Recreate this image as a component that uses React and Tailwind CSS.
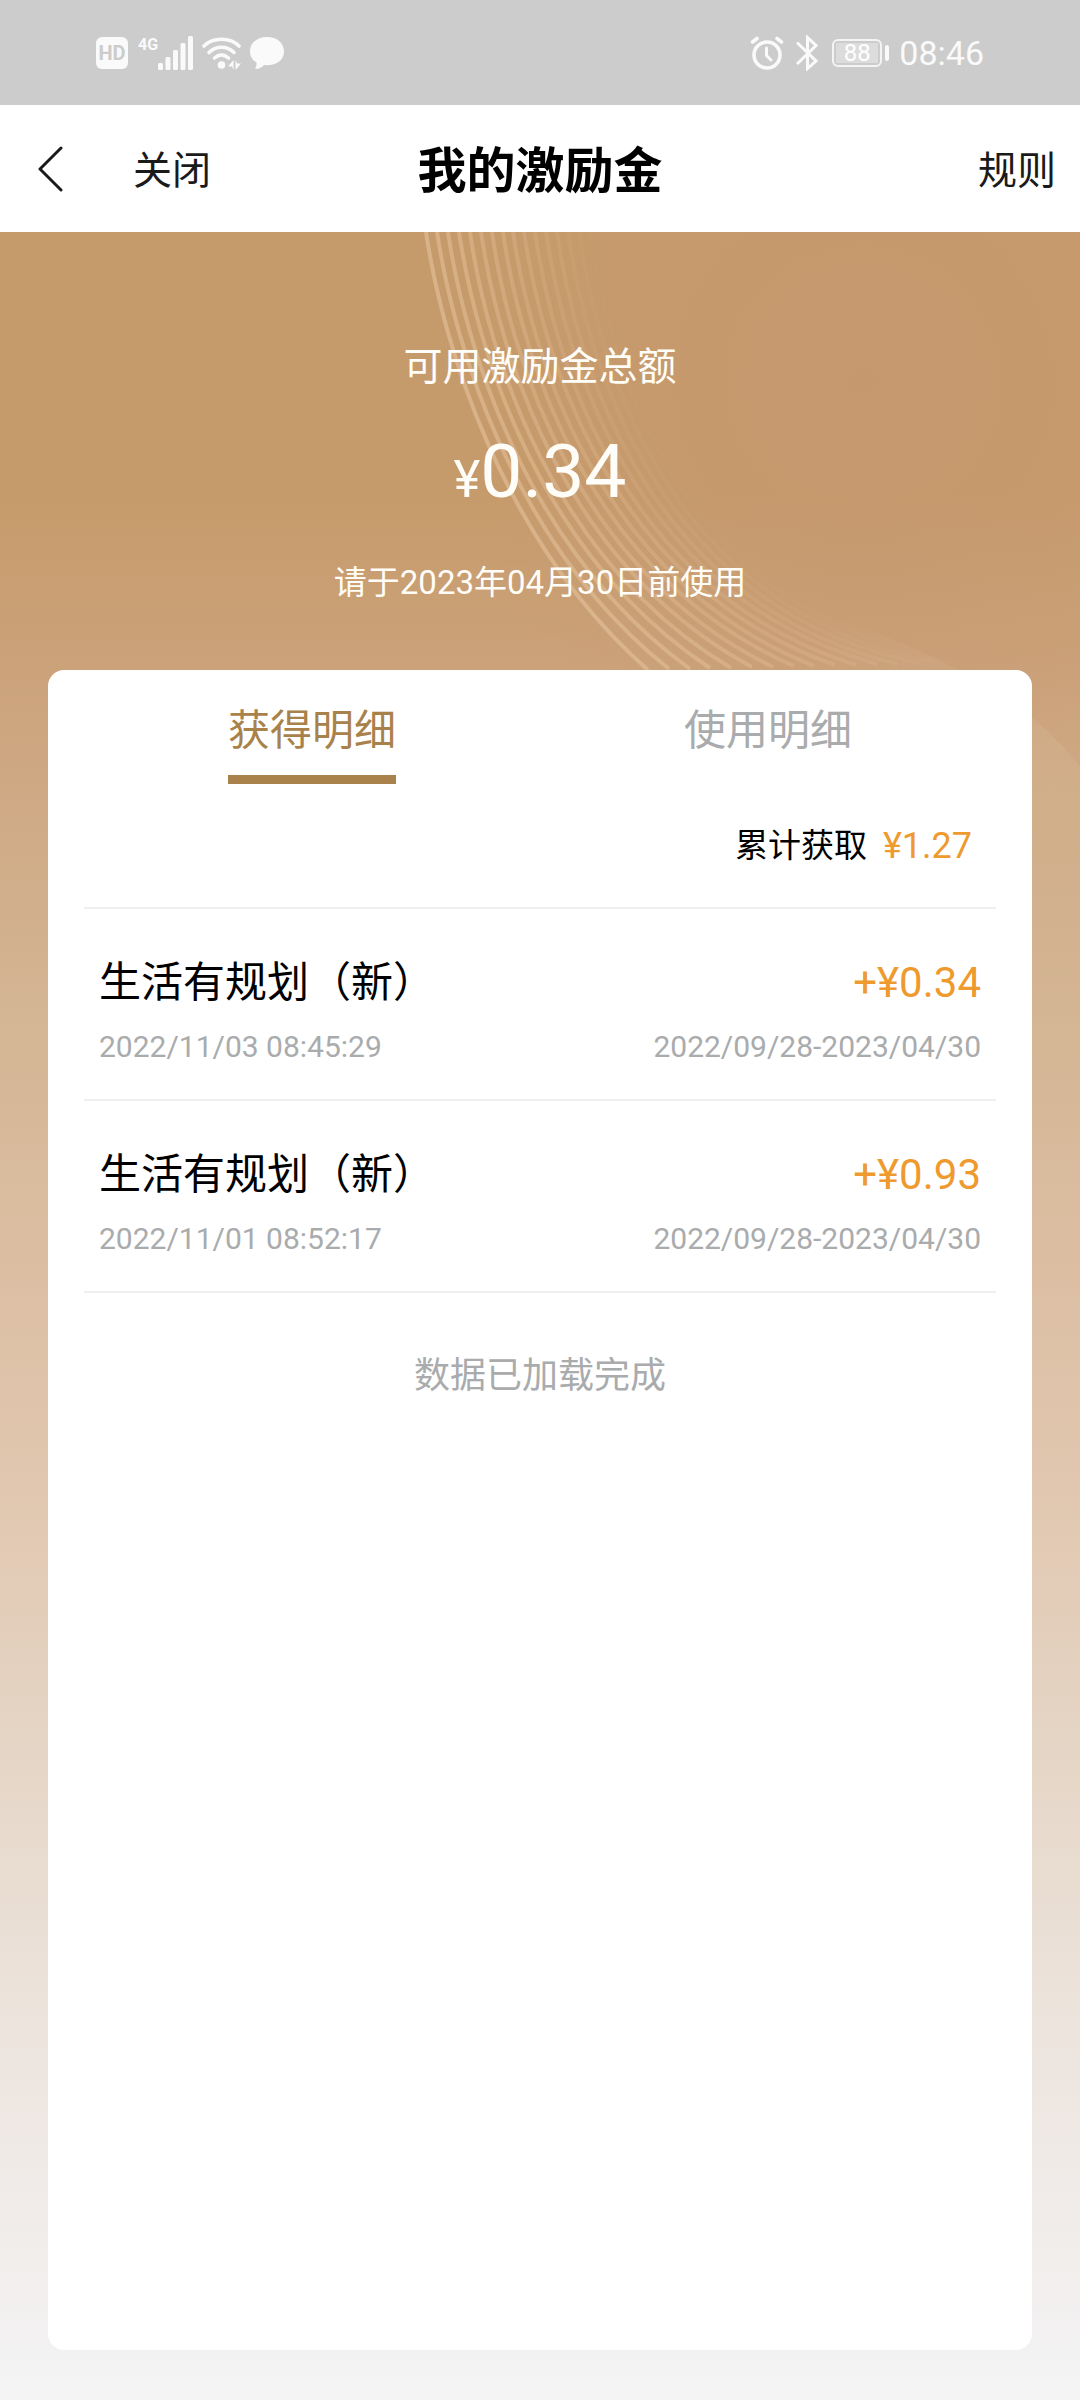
import React, { useState } from 'react';
import clsx from 'clsx';

const TABS = [
    { id: 'earned', label: '获得明细' },
    { id: 'used', label: '使用明细' },
];

const RECORDS = [
    { id: 1, title: '生活有规划（新）', amount: '+¥0.34', time: '2022/11/03 08:45:29', period: '2022/09/28-2023/04/30' },
    { id: 2, title: '生活有规划（新）', amount: '+¥0.93', time: '2022/11/01 08:52:17', period: '2022/09/28-2023/04/30' },
];

const StatusBar = () => (
    <div className="flex h-[105px] items-center justify-between bg-[#cccccc] px-24 text-[#fafafa]">
        <div className="flex items-center">
            <span className="flex h-8 w-8 items-center justify-center rounded-md bg-[#fafafa] text-xl font-bold text-[#cccccc]">HD</span>
            <span className="ml-2.5 h-8 text-base leading-4 font-bold">4G</span>
            <svg viewBox="0 0 35 34" className="h-[34px] w-[35px]" fill="currentColor" aria-hidden="true">
                <rect x="0" y="27" width="5" height="7" rx="1.500" />
                <rect x="7.500" y="21" width="5" height="13" rx="1.500" />
                <rect x="15" y="14" width="5" height="20" rx="1.500" />
                <rect x="22.500" y="7" width="5" height="27" rx="1.500" />
                <rect x="30" y="0" width="5" height="34" rx="1.500" />
            </svg>
            <svg viewBox="0 0 40 34" className="ml-2 h-[34px] w-10" fill="none" stroke="currentColor" strokeWidth="3.6" strokeLinecap="round" aria-hidden="true">
                <path d="M3 10C12 1 29 1 38 10" />
                <path d="M8 16.500C15 9.500 26 9.500 33 16.500" />
                <path d="M13.500 22C18 18 23 18 27.500 22" />
                <circle cx="20.500" cy="29" r="3.800" fill="currentColor" stroke="none" />
                <path d="M32.500 24v10l-1.500-3.500h-4zM34.500 34V24l1.500 3.500h4z" fill="currentColor" stroke="none" />
            </svg>
            <svg viewBox="0 0 36 34" className="ml-2 h-[34px] w-9" fill="currentColor" aria-hidden="true">
                <path d="M18 1C8 1 1 7 1 15.500c0 5 2.500 8.500 6.500 11 .2 2.500-.2 4.500-1.500 6.500 4 0 6.500-1.500 9-4l3 .2c10 0 17-5.500 17-13.700C35 7 28 1 18 1z" />
            </svg>
        </div>
        <div className="flex items-center">
            <svg viewBox="0 0 34 34" className="h-[34px] w-[34px]" fill="none" stroke="currentColor" strokeLinecap="round" strokeLinejoin="round" aria-hidden="true">
                <circle cx="17" cy="19" r="13" strokeWidth="3.600" />
                <path d="M16.500 12v7.500l4.500 4.500" strokeWidth="3" />
                <path d="M2.500 6L7 2.500M31.500 6L27 2.500" strokeWidth="3.600" />
            </svg>
            <svg viewBox="0 0 22 36" className="ml-3 h-9 w-[22px]" fill="none" stroke="currentColor" strokeWidth="3" aria-hidden="true">
                <path d="M1 7.500L20 26l-8.500 7.500v-31L20 10.500 1 29" />
            </svg>
            <span className="ml-3.5 flex h-7 w-[50px] items-stretch rounded-md border-2 border-[#f4f4f4] p-[2px]">
                <span className="flex w-full items-center justify-center bg-[#dcdcdc] text-2xl leading-6 text-white">88</span>
            </span>
            <span className="ml-[3px] h-4 w-1 rounded-sm bg-[#fafafa]" />
            <time className="ml-2.5 text-[34px] leading-10">08:46</time>
        </div>
    </div>
);

const NavBar = () => (
    <header className="grid h-[127px] grid-cols-[1fr_auto_1fr] items-center bg-white px-6 text-[39px] text-[#1a1a1a]">
        <div className="flex items-center pl-3">
            <button type="button" aria-label="返回" className="w-[97px]">
                <svg viewBox="0 0 28 46" className="h-[46px] w-7" fill="none" stroke="currentColor" strokeWidth="3" strokeLinecap="round" strokeLinejoin="round">
                    <path d="M25 2L4 23l21 21" />
                </svg>
            </button>
            <button type="button" className="pt-1.5">关闭</button>
        </div>
        <h1 className="pt-1.5 text-[49px] font-bold text-black">我的激励金</h1>
        <a href="#rules" className="justify-self-end pt-1.5">规则</a>
    </header>
);

// fan of curves that spreads out and fades towards the right
const WAVES = Array.from({ length: 16 }, (_, i) => {
    const t = i / 15;
    const at = (a, b) => Math.round(a + (b - a) * t);
    return {
        d: `M${at(426, 590)} 0C${at(442, 615)} ${at(108, 170)} ${at(500, 700)} ${at(308, 390)} ${at(648, 960)} ${at(438, 430)}`,
        opacity: 0.55 * (1 - t) + 0.03,
    };
});

const Waves = () => (
    <svg viewBox="0 0 1080 900" className="absolute inset-x-0 top-0 w-full" fill="none" aria-hidden="true">
        <defs>
            <radialGradient id="glow" gradientUnits="userSpaceOnUse" cx="864" cy="150" r="420">
                <stop offset="0" stopColor="#c69870" stopOpacity="0.8" />
                <stop offset="1" stopColor="#c69870" stopOpacity="0" />
            </radialGradient>
            <radialGradient id="haze" gradientUnits="userSpaceOnUse" cx="1050" cy="560" r="300">
                <stop offset="0" stopColor="#d4b592" stopOpacity="0.45" />
                <stop offset="1" stopColor="#d4b592" stopOpacity="0" />
            </radialGradient>
        </defs>
        <rect width="1080" height="600" fill="url(#glow)" />
        <path d="M700 345C840 385 1000 430 1080 535V900H700z" fill="url(#haze)" />
        {WAVES.map((w) => (
            <path key={w.d} d={w.d} stroke="#e6c39c" strokeWidth="4" strokeOpacity={w.opacity} />
        ))}
    </svg>
);

const Balance = () => (
    <section className="relative flex h-[438px] flex-col items-center pt-[105px] text-[#fffdf8]">
        <p className="text-[39px] leading-[60px]">可用激励金总额</p>
        <p className="mt-6 text-[75px] leading-[100px]">
            <span className="text-[51px]">¥</span>0.34
        </p>
        <p className="mt-7 text-[33px] leading-[50px]">请于2023年04月30日前使用</p>
    </section>
);

const Record = ({ record }) => (
    <li className="flex h-48 flex-col justify-end border-b-2 border-[#efefef] px-[15px] pb-7">
        <div className="flex items-center justify-between text-[42px] leading-[60px]">
            <h2 className="text-black">{record.title}</h2>
            <span className="text-[#ee9a2e]">{record.amount}</span>
        </div>
        <div className="mt-2.5 flex items-center justify-between text-[30px] leading-[48px] text-[#a9abad]">
            <time>{record.time}</time>
            <span>{record.period}</span>
        </div>
    </li>
);

const App = () => {
    const [tab, setTab] = useState('earned');
    const records = tab === 'earned' ? RECORDS : [];

    return (
        <div className="flex min-h-screen flex-col [font-family:Roboto,'Noto_Sans_CJK_SC',sans-serif]">
            <StatusBar />
            <NavBar />
            <main className="relative flex flex-1 flex-col bg-[linear-gradient(to_bottom,#c69b6b_0%,#c69b6b_12%,#cba27a_20%,#d1ae8b_30%,#d5b796_38%,#dcbfa3_48%,#e2c9b3_60%,#e4d3c2_68%,#eadfd5_78%,#efe9e5_88%,#f4f4f5_100%)]">
                <Waves />
                <Balance />
                <section className="relative mx-12 mb-[50px] flex-1 rounded-2xl bg-white px-9">
                    <div role="tablist" className="grid h-[114px] grid-cols-2 justify-items-center">
                        {TABS.map((t) => (
                            <button
                                key={t.id}
                                type="button"
                                role="tab"
                                aria-selected={tab === t.id}
                                onClick={() => setTab(t.id)}
                                className={clsx(
                                    'border-b-[9px] pt-[17px] text-[42px] leading-[60px]',
                                    tab === t.id ? 'border-[#a8824a] text-[#a8824a]' : 'border-transparent text-[#a9abad]'
                                )}
                            >
                                {t.label}
                            </button>
                        ))}
                    </div>
                    <p className="flex h-[125px] items-center justify-end gap-4 border-b-2 border-[#efefef] pr-6">
                        <span className="text-[33px] text-black">累计获取</span>
                        <span className="text-[36px] text-[#ee9a2e]">¥1.27</span>
                    </p>
                    <ul>
                        {records.map((r) => (
                            <Record key={r.id} record={r} />
                        ))}
                    </ul>
                    <p className="py-14 text-center text-[36px] leading-[54px] text-[#a9abad]">数据已加载完成</p>
                </section>
            </main>
        </div>
    );
};

export default App;
